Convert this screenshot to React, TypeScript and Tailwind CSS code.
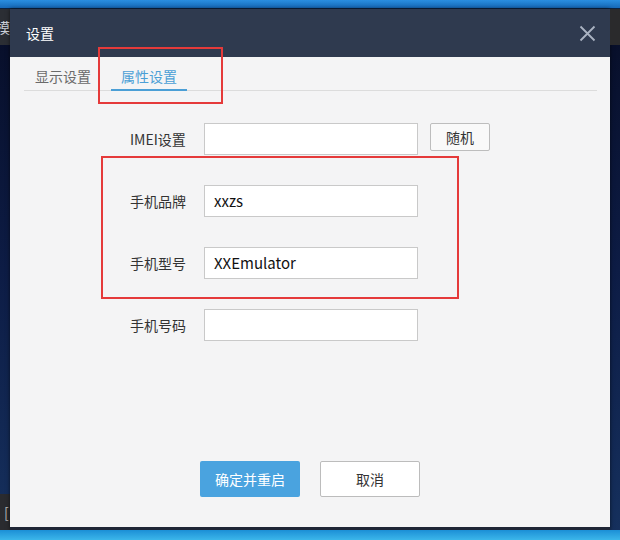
import React from 'react';

const font = { fontFamily: '"Noto Sans CJK SC", "Noto Sans", sans-serif' };

type FieldProps = {
  label: string;
  value?: string;
  extra?: React.ReactNode;
};

const Field: React.FC<FieldProps> = ({ label, value, extra }) => {
  return (
    <div className="flex items-center h-[32px]">
      <span className="w-[74px] text-[14px] text-[#333]">{label}</span>
      <div className="w-[214px] h-[32px] bg-white border border-[#c9c9c9] flex items-center px-[9px] text-[15px] text-[#111]">
        {value}
      </div>
      {extra}
    </div>
  );
};

const App: React.FC = () => {
  return (
    <div
      className="relative w-[620px] h-[540px] overflow-hidden flex flex-col bg-gradient-to-b from-[#070d26] via-[#0d1c45] to-[#16315e]"
      style={font}
    >
      {/* taskbar strip on top */}
      <div className="h-[9px] bg-gradient-to-b from-[#2a8ee0] to-[#1669b8] border-b border-[#0c2240]" />

      <div className="flex h-[521px]">
        {/* window behind the dialog, left side */}
        <div className="w-[10px] flex flex-col">
          <div className="h-[36px] bg-[#2b2e34] text-[14px] text-[#cfd3da] leading-[36px] overflow-hidden whitespace-nowrap -indent-[4px]">
            模
          </div>
          <div className="flex-1" />
          <div className="h-[36px] bg-[#2a2b2f] flex items-center text-[14px] text-[#b9b9b9] overflow-hidden">
            <span className="ml-[4px]">[</span>
          </div>
        </div>

        {/* settings dialog */}
        <div className="w-[600px] flex flex-col border-b-[3px] border-[#1f2636] shadow-[0_0_4px_rgba(0,0,0,0.6)]">
          <div className="h-[48px] bg-[#2f3a4f] flex items-center justify-between pl-[16px] pr-[14px]">
            <span className="text-[14px] text-white">设置</span>
            <svg width="17" height="17" viewBox="0 0 17 17" className="text-[#aab3c2]">
              <path d="M1.5 1.5 L15.5 15.5 M15.5 1.5 L1.5 15.5" stroke="currentColor" strokeWidth="1.8" />
            </svg>
          </div>

          <div className="flex-1 bg-[#f4f4f5] flex flex-col">
            {/* tabs */}
            <div className="mx-[14px] mr-[13px] h-[34px] border-b border-[#dcdcdc] flex items-end">
              <div className="px-[11px] pb-[3px] text-[14px] text-[#6a6a6a]">显示设置</div>
              <div className="ml-[9px] px-[10px] pb-[2px] text-[14px] text-[#4b9fd6] border-b-2 border-[#4b9fd6] -mb-px">
                属性设置
              </div>
            </div>

            {/* fields */}
            <div className="flex flex-col gap-[30px] pl-[120px] pt-[32px]">
              <Field
                label="IMEI设置"
                extra={
                  <button className="ml-[12px] w-[60px] h-[28px] -mt-[4px] bg-[#f9f9f9] border border-[#bdbdbd] rounded-[2px] text-[14px] text-[#333]">
                    随机
                  </button>
                }
              />
              <Field label="手机品牌" value="xxzs" />
              <Field label="手机型号" value="XXEmulator" />
              <Field label="手机号码" />
            </div>

            <div className="flex-1" />

            {/* footer buttons */}
            <div className="flex justify-center gap-[20px] pb-[30px]">
              <button className="w-[100px] h-[36px] bg-[#4aa3df] rounded-[2px] text-[14px] text-white">
                确定并重启
              </button>
              <button className="w-[100px] h-[36px] bg-white border border-[#bcbcbc] rounded-[2px] text-[14px] text-[#333]">
                取消
              </button>
            </div>
          </div>
        </div>

        {/* window behind the dialog, right side */}
        <div className="w-[10px] flex flex-col">
          <div className="h-[36px] bg-[#2a2a2c]" />
        </div>
      </div>

      {/* taskbar strip at the bottom */}
      <div className="h-[10px] bg-gradient-to-b from-[#1b8fd6] to-[#3bb6ea]" />

      {/* red highlight frames */}
      <div className="absolute left-[98px] top-[47px] w-[125px] h-[57px] border-2 border-[#e53a3a]" />
      <div className="absolute left-[101px] top-[156px] w-[358px] h-[143px] border-2 border-[#e53a3a]" />
    </div>
  );
};

export default App;
